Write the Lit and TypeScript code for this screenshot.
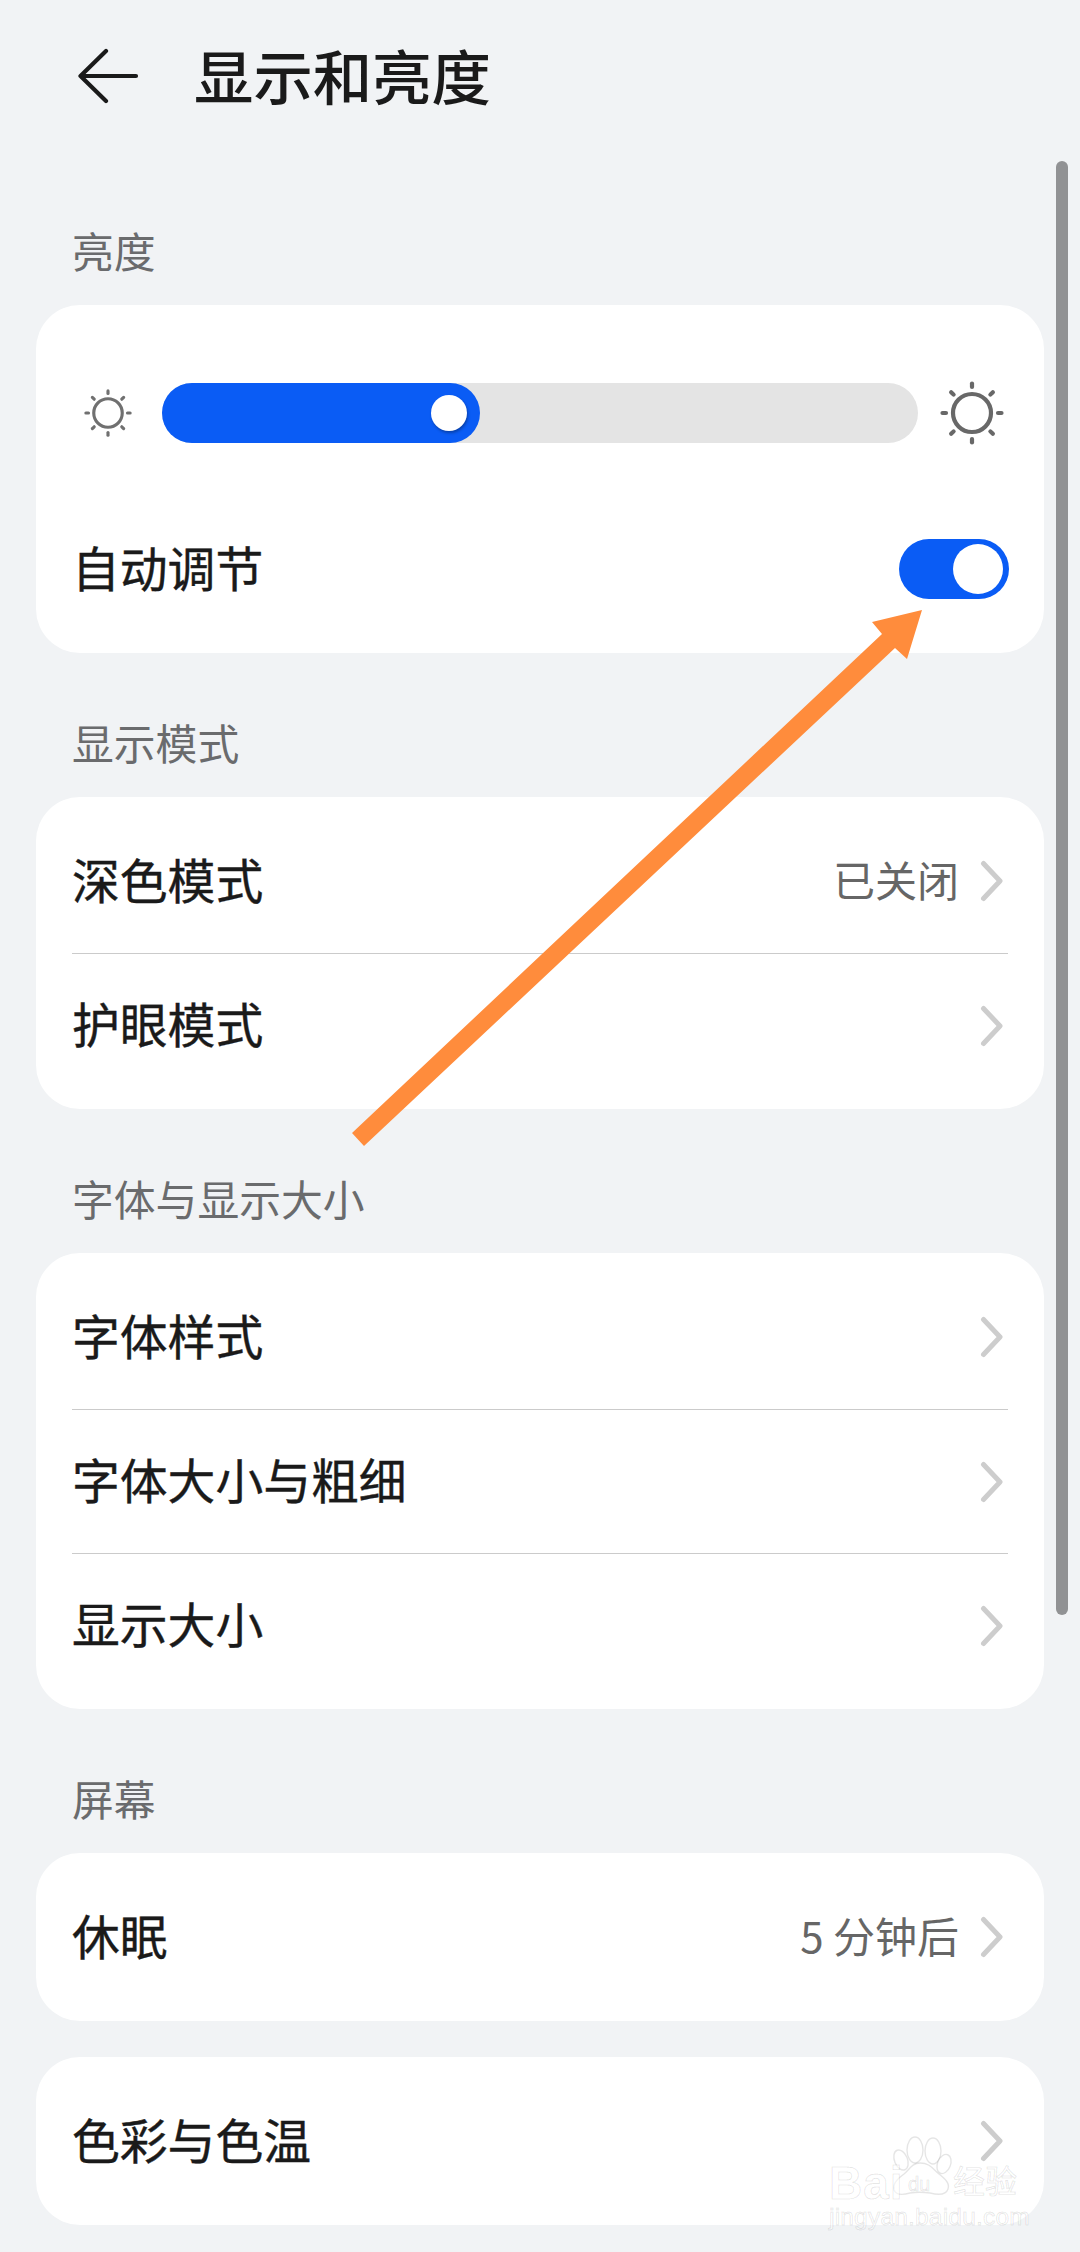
import { LitElement, html, css, svg } from "lit";
import { customElement } from "lit/decorators.js";

const rays = [0, 45, 90, 135, 180, 225, 270, 315];

const sun = (cls: string) => html`<svg class="sun ${cls}" viewBox="0 0 64 64" fill="none" stroke="currentColor" stroke-linecap="round" stroke-width="4.2">
  <circle cx="32" cy="32" r="19"></circle>
  ${rays.map((a) => svg`<line x1="32" y1="6" x2="32" y2="2.5" transform="rotate(${a} 32 32)"></line>`)}
</svg>`;

const chevron = html`<svg class="chev" viewBox="0 0 24 42" fill="none" stroke="#cdcdcd" stroke-width="5" stroke-linecap="round" stroke-linejoin="round"><path d="M3.5 3.5 L20 21 L3.5 38.5"></path></svg>`;

interface Row { label: string; value?: string }

@customElement("app-root")
export class AppRoot extends LitElement {
  static styles = css`
    :host {
      display: block;
      position: relative;
      width: 1080px;
      height: 2252px;
      overflow: hidden;
      background: #f1f3f5;
      font-family: "Noto Sans CJK SC", "Noto Sans", sans-serif;
      color: #1a1a1a;
    }
    .header {
      height: 161px;
      box-sizing: border-box;
      display: flex;
      align-items: flex-start;
      padding: 47px 0 0 78px;
    }
    .back { width: 62px; height: 58px; flex: none; }
    .title {
      margin: -3px 0 0 54px;
      font-size: 59.4px;
      line-height: 60px;
      font-weight: 500;
    }
    .page { padding: 0 36px; }
    .label {
      height: 144px;
      box-sizing: border-box;
      padding: 0 0 27px 36px;
      display: flex;
      align-items: flex-end;
      font-size: 41.8px;
      line-height: 56px;
      color: #6a6b6d;
    }
    .card {
      background: #fff;
      border-radius: 44px;
      padding: 12px 36px;
    }
    .card.tight { margin-top: 36px; }
    .row {
      height: 144px;
      box-sizing: border-box;
      display: flex;
      align-items: center;
      font-size: 47.8px;
    }
    .row + .row { border-top: 1px solid #cbcbcb; }
    .row .name {
      flex: 1;
      margin-top: -6px;
      -webkit-text-stroke: 0.4px #1a1a1a;
    }
    .value {
      font-size: 42px;
      color: #666;
      margin: -6px 20px 0 0;
    }
    .chev { width: 24px; height: 42px; flex: none; margin-right: 4px; margin-left: 1px; }
    .bright { padding: 0; height: 348px; box-sizing: border-box; }
    .slider-row {
      display: flex;
      align-items: center;
      padding: 78px 40px 42px 48px;
      height: 180px;
      box-sizing: border-box;
    }
    .sun { flex: none; overflow: visible; color: #686868; }
    .sun.small { width: 48px; height: 48px; margin-right: 30px; color: #707070; }
    .sun.big { width: 64px; height: 64px; margin-left: 22px; }
    .track {
      flex: 1;
      height: 60px;
      border-radius: 30px;
      background: #e4e4e4;
      display: flex;
    }
    .fill {
      width: 318px;
      height: 60px;
      border-radius: 30px;
      background: #0a5cf5;
      display: flex;
      align-items: center;
      justify-content: flex-end;
      padding-right: 13px;
      box-sizing: border-box;
    }
    .knob {
      width: 36px;
      height: 36px;
      border-radius: 50%;
      background: #fff;
      box-shadow: 1px 2px 3px rgba(0, 0, 0, 0.3);
    }
    .auto {
      height: 168px;
      box-sizing: border-box;
      padding: 0 35px 0 36px;
      display: flex;
      align-items: center;
      justify-content: space-between;
      font-size: 47.8px;
    }
    .auto span {
      margin-top: -6px;
      -webkit-text-stroke: 0.4px #1a1a1a;
    }
    .toggle {
      width: 110px;
      height: 60px;
      border-radius: 30px;
      background: #0a5cf5;
      display: flex;
      align-items: center;
      justify-content: flex-end;
      padding-right: 6px;
      box-sizing: border-box;
    }
    .toggle i { display: block; width: 50px; height: 50px; border-radius: 50%; background: #fff; }
    .scrollbar {
      position: absolute;
      left: 1056px;
      top: 161px;
      width: 12px;
      height: 1454px;
      border-radius: 6px;
      background: #919294;
    }
    .arrow {
      position: absolute;
      left: 0;
      top: 0;
      width: 1080px;
      height: 2252px;
      pointer-events: none;
    }
    .mark {
      position: absolute;
      left: 820px;
      top: 2120px;
      width: 220px;
      height: 120px;
      pointer-events: none;
      font-family: "Liberation Sans", sans-serif;
      color: rgba(255, 255, 255, 0.55);
      -webkit-text-stroke: 1px rgba(0, 0, 0, 0.1);
      white-space: nowrap;
    }
    .mark svg { position: absolute; left: 0; top: 0; width: 220px; height: 120px; }
    .mark span { position: absolute; line-height: 1; }
    .bai { left: 9px; top: 40px; font-size: 46px; font-weight: 700; letter-spacing: 1px; }
    .du { left: 88px; top: 54px; font-size: 20px; }
    .jy { left: 133px; top: 43px; font-size: 32px; font-family: "Noto Sans CJK SC", sans-serif; }
    .url { left: 9px; top: 85px; font-size: 24.5px; letter-spacing: 0.2px; }
  `;

  private rows(rows: Row[]) {
    return rows.map(
      (r) => html`<div class="row">
        <span class="name">${r.label}</span>
        ${r.value ? html`<span class="value">${r.value}</span>` : null}
        ${chevron}
      </div>`
    );
  }

  render() {
    return html`
      <div class="header">
        <svg class="back" viewBox="0 0 62 58" fill="none" stroke="#1a1a1a" stroke-width="4.2" stroke-linecap="round" stroke-linejoin="round">
          <path d="M2.5 29 H58 M28 4 L2.5 29 L28 54"></path>
        </svg>
        <div class="title">显示和亮度</div>
      </div>
      <div class="page">
        <div class="label">亮度</div>
        <div class="card bright">
          <div class="slider-row">
            ${sun("small")}
            <div class="track"><div class="fill"><div class="knob"></div></div></div>
            ${sun("big")}
          </div>
          <div class="auto">
            <span>自动调节</span>
            <div class="toggle"><i></i></div>
          </div>
        </div>
        <div class="label">显示模式</div>
        <div class="card">${this.rows([{ label: "深色模式", value: "已关闭" }, { label: "护眼模式" }])}</div>
        <div class="label">字体与显示大小</div>
        <div class="card">${this.rows([{ label: "字体样式" }, { label: "字体大小与粗细" }, { label: "显示大小" }])}</div>
        <div class="label">屏幕</div>
        <div class="card">${this.rows([{ label: "休眠", value: "5 分钟后" }])}</div>
        <div class="card tight">${this.rows([{ label: "色彩与色温" }])}</div>
      </div>
      <div class="scrollbar"></div>
      <svg class="arrow" viewBox="0 0 1080 2252">
        <polygon fill="#ff8c3c" points="352,1133 364,1146 895,648 907,659 922,610 872,622 882,634"></polygon>
      </svg>
      <div class="mark">
        <svg viewBox="0 0 220 120" fill="rgba(255,255,255,0.55)" stroke="rgba(0,0,0,0.1)" stroke-width="1.4">
          <ellipse cx="95" cy="30" rx="8" ry="13"></ellipse>
          <ellipse cx="113" cy="31" rx="8" ry="13"></ellipse>
          <ellipse cx="81" cy="40" rx="6.5" ry="10.5" transform="rotate(-22 81 40)"></ellipse>
          <ellipse cx="124" cy="44" rx="6.5" ry="10" transform="rotate(22 124 44)"></ellipse>
          <path d="M100 43 C92 43 89 50 84 54 C77 59 72 64 74 70 C76 75 83 75 90 73 C96 72 103 72 110 73 C118 75 126 75 128 69 C130 63 125 59 119 54 C113 49 110 43 100 43 Z"></path>
        </svg>
        <span class="bai">Bai</span>
        <span class="du">du</span>
        <span class="jy">经验</span>
        <span class="url">jingyan.baidu.com</span>
      </div>
    `;
  }
}
